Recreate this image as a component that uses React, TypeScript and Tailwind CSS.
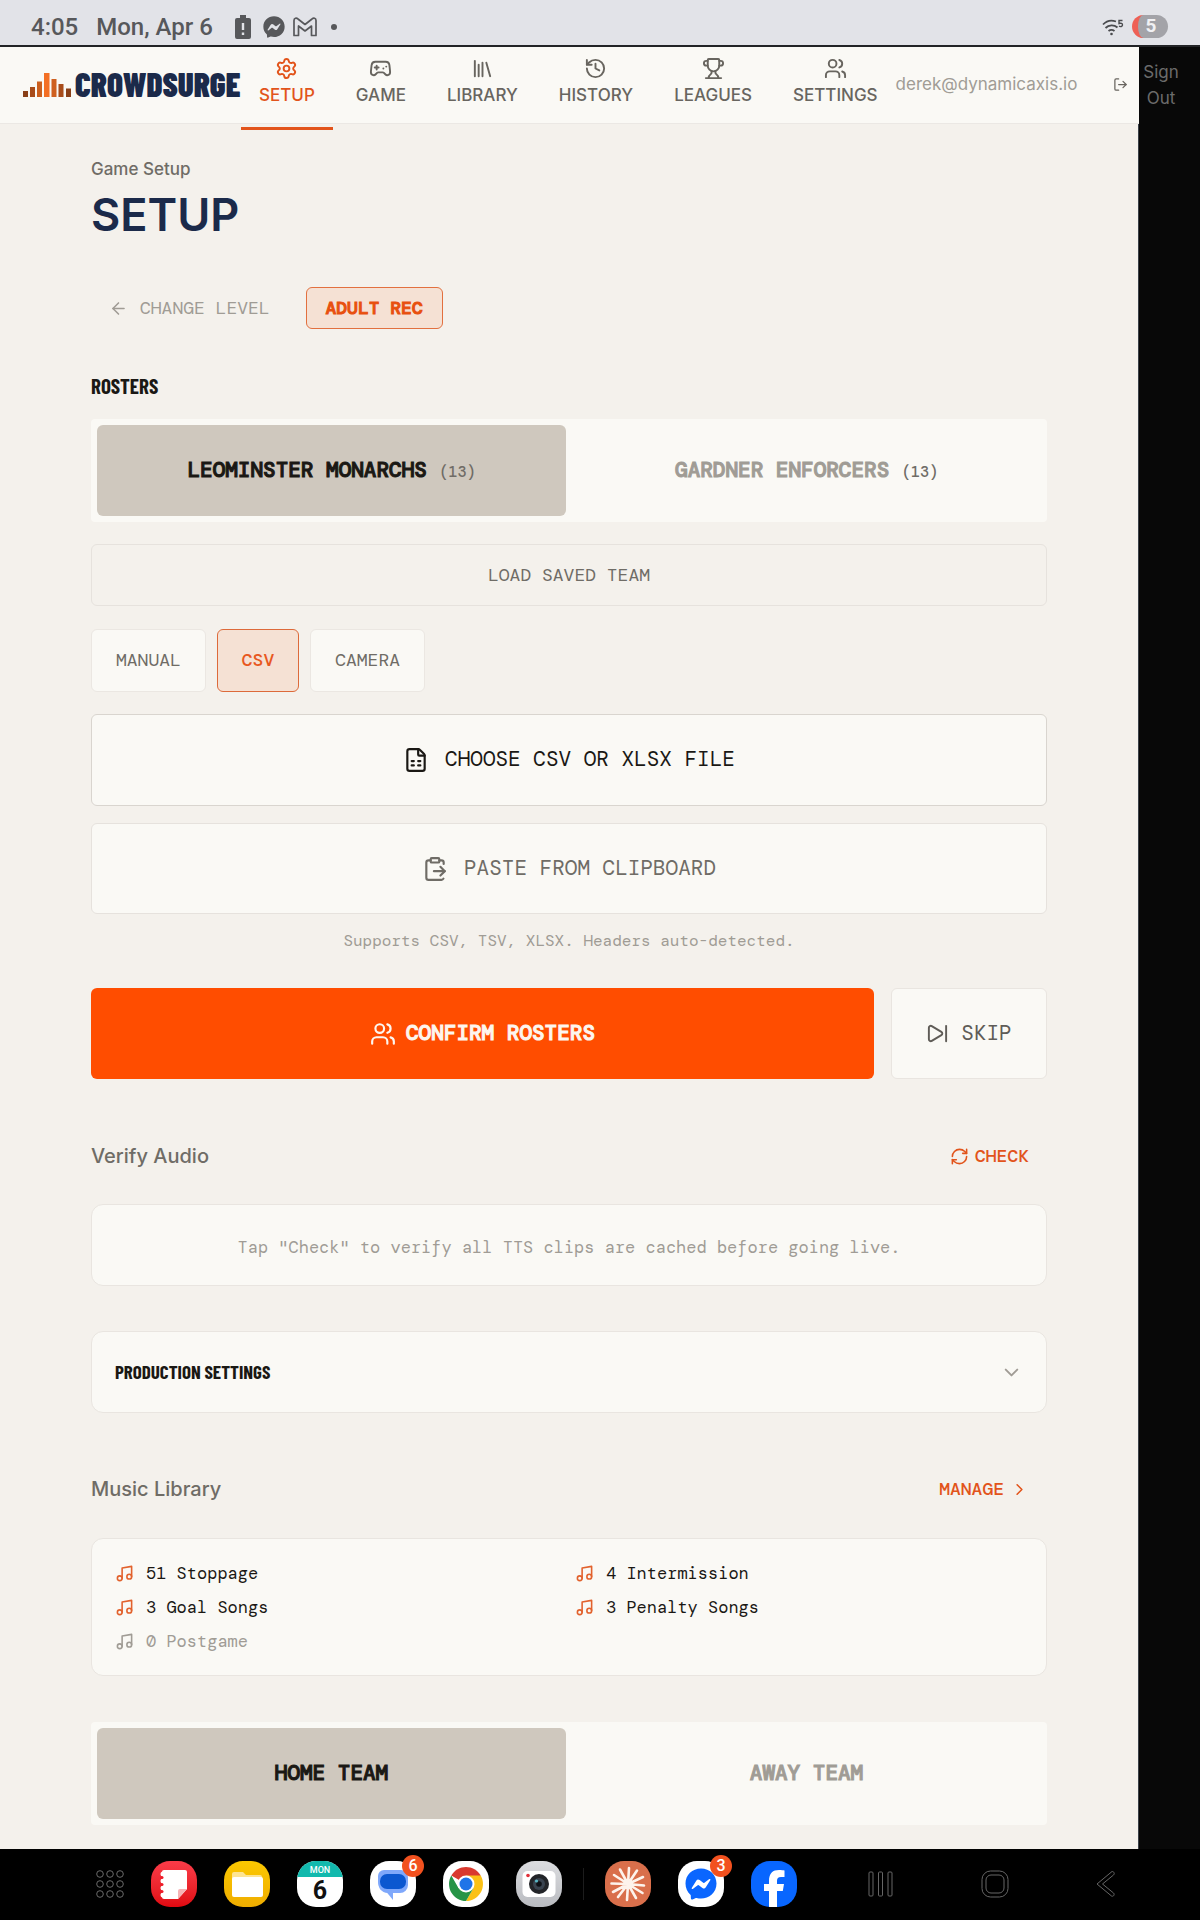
import { ReactNode } from "react";
import {
  ArrowLeft,
  ChevronDown,
  ChevronRight,
  ClipboardPaste,
  FileSpreadsheet,
  Gamepad2,
  History,
  Library,
  LogOut,
  LucideIcon,
  Music,
  RefreshCw,
  Settings,
  SkipForward,
  Trophy,
  Users,
} from "lucide-react";
import { FaFacebookMessenger } from "react-icons/fa";

const navItems: { label: string; icon: LucideIcon; active?: boolean }[] = [
  { label: "SETUP", icon: Settings, active: true },
  { label: "GAME", icon: Gamepad2 },
  { label: "LIBRARY", icon: Library },
  { label: "HISTORY", icon: History },
  { label: "LEAGUES", icon: Trophy },
  { label: "SETTINGS", icon: Users },
];

const songs = [
  { count: 51, name: "Stoppage" },
  { count: 4, name: "Intermission" },
  { count: 3, name: "Goal Songs" },
  { count: 3, name: "Penalty Songs" },
  { count: 0, name: "Postgame" },
];

// Android status bar
function StatusBar() {
  return (
    <div className="flex h-[47px] items-center justify-between border-b-2 border-[#222326] bg-[#e2e3e8] pt-2 pr-8 pl-[31px] font-[Roboto,sans-serif] text-[24px] font-medium text-[#57585b]">
      <div className="flex items-center">
        <span>4:05</span>
        <span className="ml-[18px]">Mon, Apr 6</span>
        <svg className="ml-[22px] h-6 w-4" viewBox="0 0 16 24">
          <path
            d="M5 0h6v3h3a2 2 0 0 1 2 2v17a2 2 0 0 1-2 2H2a2 2 0 0 1-2-2V5a2 2 0 0 1 2-2h3z"
            fill="#57585b"
          />
          <path d="M8 8v7M8 17.500v2.500" stroke="#e2e3e8" strokeWidth="2.400" />
        </svg>
        <FaFacebookMessenger className="ml-3 h-[22px] w-[22px]" />
        <svg className="ml-2 h-5 w-6" viewBox="0 0 24 20" fill="none" stroke="#57585b" strokeWidth="1.700">
          <path
            d="M1 18.500V3.500C1 1 3.500.500 5 2l7 5.500L19 2c1.500-1.500 4-1 4 1.500v15h-4.500V9L12 14 5.500 9v9.500z"
            strokeLinejoin="round"
          />
        </svg>
        <span className="ml-3.5 h-1.5 w-1.5 rounded-full bg-[#57585b]" />
      </div>
      <div className="flex items-center gap-2">
        <svg className="h-5 w-[22px]" viewBox="0 0 22 20" fill="none" stroke="#4a4b4e" strokeWidth="1.800">
          <path d="M1 7.500a12 12 0 0 1 13-3M3.500 11a9 9 0 0 1 12-.500M6.500 14a5 5 0 0 1 6 0" />
          <circle cx="9.500" cy="17" r="1.300" fill="#4a4b4e" stroke="none" />
          <path d="M20.500 3.500H17v3c2-.600 3.500 0 3.500 1.500S18.500 10 17 9.200" strokeWidth="1.400" />
        </svg>
        <div className="flex h-[23px] w-9 items-center justify-center overflow-hidden rounded-full border-l-[6px] border-[#ee6055] bg-[#a3a3a8] pr-1 text-[19px] font-bold text-[#f1f1f4]">
          5
        </div>
      </div>
    </div>
  );
}

function Logo() {
  return (
    <a href="#" className="flex w-[218px] shrink-0 items-end gap-1 pb-0.5" aria-label="Crowdsurge">
      <svg className="h-6 w-12 shrink-0" viewBox="0 0 48 24">
        <rect x="0" y="18" width="5" height="6" fill="#8a4018" />
        <rect x="7" y="14" width="5" height="10" fill="#a84c1a" />
        <rect x="14" y="8.500" width="5" height="15.500" fill="#cb5f1e" />
        <rect x="21" y="0" width="5.500" height="24" fill="#f36f24" />
        <rect x="28.500" y="6" width="5" height="18" fill="#cf601f" />
        <rect x="35.500" y="11" width="5" height="13" fill="#a84c1a" />
        <rect x="43" y="15.500" width="5" height="8.500" fill="#8a4018" />
      </svg>
      <span className="font-['Barlow_Condensed','Liberation_Sans',sans-serif] text-[33px] leading-[26px] font-black text-[#1b2a4a]">
        CROWDSURGE
      </span>
    </a>
  );
}

function Header() {
  return (
    <header className="mr-[61px] h-[77px] border-b border-[#ebe8e4] bg-[#faf9f5] pl-[23px]">
      {/* the row runs past the header's right edge */}
      <div className="-mr-[61px] flex h-[75px] items-center">
        <Logo />
        <nav className="flex h-full shrink-0 gap-[5px]">
          {navItems.map(({ label, icon: Icon, active }) => (
            <a
              key={label}
              href="#"
              className={
                active
                  ? "-mb-2 flex flex-col items-center border-b-[3px] border-[#e2541b] px-[18px] pt-2.5 text-[#e2541b]"
                  : "flex flex-col items-center px-[18px] pt-2.5 text-[#68655f]"
              }
            >
              <Icon size={23} strokeWidth={2} />
              <span className="mt-[3px] text-[17px] leading-6 font-medium">{label}</span>
            </a>
          ))}
        </nav>
        <span className="text-[17px] text-[#a09c95]">derek@dynamicaxis.io</span>
        <button className="ml-auto flex w-[87px] items-center justify-between pr-[17px] text-[17px] leading-[26px] text-[#6b6b6b]">
          <LogOut size={15} strokeWidth={2} className="text-[#68655f]" />
          <span className="w-[44px] text-center">Sign Out</span>
        </button>
      </div>
    </header>
  );
}

function SegmentedTabs({ left, right }: { left: ReactNode; right: ReactNode }) {
  return (
    <div className="grid grid-cols-2 gap-1.5 rounded bg-[#faf9f5] p-1.5 text-[21px] font-medium [-webkit-text-stroke:1px]">
      <button className="h-[91px] rounded-md bg-[#cfc8be] text-[#1a1814]">{left}</button>
      <button className="h-[91px] rounded-md text-[#a09c95]">{right}</button>
    </div>
  );
}

function Count({ value }: { value: number }) {
  return <span className="text-[15px] text-[#6f6c66] [-webkit-text-stroke:0px]">({value})</span>;
}

function SectionTitle({ title, children }: { title: string; children: ReactNode }) {
  return (
    <div className="flex h-12 items-center justify-between">
      <h2 className="font-[Inter,sans-serif] text-[20px] font-medium text-[#6f6c66]">{title}</h2>
      {children}
    </div>
  );
}

function Main() {
  return (
    <main className="mr-[61px] border-r border-[#3a4048] bg-[#f4f1ec] px-[91px] pt-8 pb-6 font-['DM_Mono','Liberation_Mono',monospace]">
      <p className="font-[Inter,sans-serif] text-[17px] leading-[26px] font-medium text-[#6f6c66]">Game Setup</p>
      <h1 className="mt-[5px] font-[Inter,sans-serif] text-[45px] leading-[56px] font-semibold text-[#1b2a4a]">SETUP</h1>

      <div className="mt-[44px] flex items-center text-[18px]">
        <button className="flex items-center gap-3 pl-[18px] text-[#a09c95]">
          <ArrowLeft size={19} strokeWidth={2} />
          CHANGE LEVEL
        </button>
        <span className="ml-[36px] flex h-[42px] w-[137px] items-center justify-center rounded-md border border-[#e2703f] bg-[#f5e1d4] font-medium text-[#e8500f] [-webkit-text-stroke:1px]">
          ADULT REC
        </span>
      </div>

      <h2 className="mt-[44px] font-['Barlow_Condensed','Liberation_Sans',sans-serif] text-[21px] leading-[26px] font-bold text-[#1a1814]">
        ROSTERS
      </h2>
      <div className="mt-5">
        <SegmentedTabs
          left={<>LEOMINSTER MONARCHS <Count value={13} /></>}
          right={<>GARDNER ENFORCERS <Count value={13} /></>}
        />
      </div>

      <button className="mt-[22px] h-[62px] w-full rounded-md border border-[#e6e2dd] text-[18px] text-[#6f6c66]">
        LOAD SAVED TEAM
      </button>

      <div className="mt-[23px] flex h-[63px] gap-[11px] text-[18px] text-[#6f6c66]">
        <button className="rounded-md border border-[#ebe7e2] bg-[#faf9f5] px-6">MANUAL</button>
        <button className="rounded-md border border-[#dd6a3a] bg-[#f5e1d4] px-6 font-medium text-[#e8581f]">CSV</button>
        <button className="rounded-md border border-[#ebe7e2] bg-[#faf9f5] px-6">CAMERA</button>
      </div>

      <button className="mt-[22px] flex h-[92px] w-full items-center justify-center gap-4 rounded-md border border-[#d9d5cf] bg-[#faf9f5] text-[21px] text-[#1a1814]">
        <FileSpreadsheet size={26} strokeWidth={2} />
        CHOOSE CSV OR XLSX FILE
      </button>
      <button className="mt-[17px] flex h-[91px] w-full items-center justify-center gap-4 rounded-md border border-[#e6e2dd] bg-[#faf9f5] text-[21px] text-[#6f6c66]">
        <ClipboardPaste size={26} strokeWidth={2} />
        PASTE FROM CLIPBOARD
      </button>
      <p className="mt-[15px] text-center text-[16px] leading-6 text-[#a09c95]">
        Supports CSV, TSV, XLSX. Headers auto-detected.
      </p>

      <div className="mt-[35px] flex h-[91px] gap-[17px] text-[21px]">
        <button className="flex grow items-center justify-center gap-2.5 rounded-md bg-[#ff4d00] font-medium text-[#fdf6ef]">
          <Users size={26} strokeWidth={2} />
          <span className="[-webkit-text-stroke:1px]">CONFIRM ROSTERS</span>
        </button>
        <button className="flex w-[156px] items-center justify-center gap-3 rounded-md border border-[#e9e5e0] bg-[#faf9f5] text-[#5f5c57]">
          <SkipForward size={23} strokeWidth={2} />
          SKIP
        </button>
      </div>

      <div className="mt-[53px]">
        <SectionTitle title="Verify Audio">
          <button className="flex items-center gap-1.5 pr-[18px] text-[18px] font-medium text-[#e2541b]">
            <RefreshCw size={19} strokeWidth={2} />
            CHECK
          </button>
        </SectionTitle>
      </div>
      <div className="mt-6 flex h-[82px] items-center justify-center rounded-xl border border-[#e9e5e0] bg-[#faf9f5] pt-1.5 text-[17px] text-[#a09c95]">
        Tap "Check" to verify all TTS clips are cached before going live.
      </div>

      <button className="mt-[45px] flex h-[82px] w-full items-center justify-between rounded-xl border border-[#e9e5e0] bg-[#faf9f5] px-[23px] text-[#a09c95]">
        <span className="font-['Barlow_Condensed','Liberation_Sans',sans-serif] text-[19px] font-bold text-[#1a1814]">
          PRODUCTION SETTINGS
        </span>
        <ChevronDown size={23} strokeWidth={2} />
      </button>

      <div className="mt-[52px]">
        <SectionTitle title="Music Library">
          <button className="flex items-center gap-1.5 pr-[18px] text-[18px] font-medium text-[#e2541b]">
            MANAGE
            <ChevronRight size={19} strokeWidth={2} />
          </button>
        </SectionTitle>
      </div>
      <ul className="mt-[25px] grid h-[138px] auto-rows-min grid-cols-2 gap-x-3 rounded-xl border border-[#e9e5e0] bg-[#faf9f5] px-[23px] pt-[17px] text-[17px] leading-[34px] text-[#1a1814]">
        {songs.map(({ count, name }) => (
          <li key={name} className={count ? "flex items-center gap-3" : "flex items-center gap-3 text-[#a09c95]"}>
            <Music size={19} strokeWidth={2} className={count ? "text-[#e2622d]" : ""} />
            {count} {name}
          </li>
        ))}
      </ul>

      <div className="mt-[46px]">
        <SegmentedTabs left="HOME TEAM" right="AWAY TEAM" />
      </div>
    </main>
  );
}

// Dock tile with an optional unread badge
function AppTile({ name, className, badge, children }: { name: string; className: string; badge?: number; children: ReactNode }) {
  return (
    <button aria-label={name} className="relative h-[46px] w-[46px] shrink-0">
      <span className={`flex h-full w-full items-center justify-center overflow-hidden rounded-[19px] ${className}`}>
        {children}
      </span>
      {badge && (
        <span className="absolute -top-1.5 -right-2 flex h-[22px] w-[22px] items-center justify-center rounded-full bg-[#f2511f] text-[16px] font-medium text-white">
          {badge}
        </span>
      )}
    </button>
  );
}

function Dock() {
  return (
    <footer className="flex h-[72px] items-center justify-between bg-black pr-[84px] pb-0.5 pl-24 font-[Roboto,sans-serif]">
      <div className="flex items-center gap-[27px]">
        <button aria-label="All apps">
          <svg className="h-7 w-7" viewBox="0 0 28 28" fill="none" stroke="#6a6a6a" strokeWidth="1">
            {[4, 14, 24].map((y) => [4, 14, 24].map((x) => <circle key={`${x}-${y}`} cx={x} cy={y} r="3.300" />))}
          </svg>
        </button>
        <AppTile name="Notes" className="bg-linear-to-b from-[#fb3b48] to-[#e0070f]">
          <svg className="h-full w-full" viewBox="0 0 46 46">
            <path d="M13 9h21a2 2 0 0 1 2 2v17L27 38H13a2 2 0 0 1-2-2V11a2 2 0 0 1 2-2z" fill="#fff" />
            <path d="M36 28h-7a2 2 0 0 0-2 2v8z" fill="#f6b3b5" />
            <g fill="#fff">
              <circle cx="12" cy="13" r="2.500" />
              <circle cx="12" cy="20" r="2.500" />
              <circle cx="12" cy="27" r="2.500" />
              <circle cx="12" cy="34" r="2.500" />
            </g>
            <g fill="#ee1c29">
              <circle cx="11" cy="16.500" r="1.500" />
              <circle cx="11" cy="23.500" r="1.500" />
              <circle cx="11" cy="30.500" r="1.500" />
            </g>
          </svg>
        </AppTile>
        <AppTile name="My Files" className="bg-linear-to-b from-[#fcc800] to-[#efad00]">
          <svg className="h-full w-full" viewBox="0 0 46 46">
            <path d="M8 13a2 2 0 0 1 2-2h9l3 3h14a2 2 0 0 1 2 2v6H8z" fill="#fde494" />
            <rect x="8" y="16" width="31" height="20" rx="2" fill="#fff" />
          </svg>
        </AppTile>
        <AppTile name="Calendar" className="flex-col bg-white">
          <span className="h-4 w-full bg-[#12b9ad] text-center text-[9px] leading-[18px] font-medium text-white">MON</span>
          <span className="h-[30px] text-[25px] leading-7 font-bold text-[#111]">6</span>
        </AppTile>
        <AppTile name="Messages" className="bg-white" badge={6}>
          <svg className="h-full w-full" viewBox="0 0 46 46">
            <path d="M14 9h17a7 7 0 0 1 7 7v8a8 8 0 0 1-8 8H18C11 32 8 26 8 21v-6a6 6 0 0 1 6-6z" fill="#7fa8fb" />
            <path d="M14 28l9 11V30z" fill="#7fa8fb" />
            <rect x="10" y="13" width="26" height="15" rx="7" fill="#0b57d0" />
          </svg>
        </AppTile>
        <AppTile name="Chrome" className="bg-white">
          <svg className="h-full w-full" viewBox="0 0 46 46">
            <path d="M23 23L8.300 14.500A17 17 0 0 1 37.700 14.500z" fill="#d93a2f" />
            <path d="M23 14.500h14.700A17 17 0 0 1 23 40l7.400-12.700z" fill="#fbc116" />
            <path d="M8.300 14.500L15.600 27.200 30.400 27.200 23 40A17 17 0 0 1 8.300 14.500z" fill="#269447" />
            <circle cx="23" cy="23" r="8.500" fill="#fff" />
            <circle cx="23" cy="23" r="6.500" fill="#1f74e8" />
          </svg>
        </AppTile>
        <AppTile name="Camera" className="bg-linear-to-b from-[#dcdde0] to-[#b9bbc0]">
          <svg className="h-full w-full" viewBox="0 0 46 46">
            <rect x="6.500" y="10" width="33" height="26" rx="5" fill="#fff" />
            <circle cx="12" cy="14.500" r="1.800" fill="#e0313a" />
            <circle cx="23" cy="23" r="10" fill="#222428" />
            <circle cx="23" cy="23" r="6" fill="#39434f" />
            <circle cx="23" cy="23" r="2.800" fill="#0e1116" />
            <circle cx="20.500" cy="20" r="1.600" fill="#58b5c4" />
          </svg>
        </AppTile>
        <span className="-mx-[6px] h-8 w-px bg-[#1c1c1c]" />
        <AppTile name="Claude" className="bg-[#d96f4b]">
          <svg className="h-full w-full" viewBox="0 0 46 46" stroke="#fdf3ec" strokeWidth="2.600" strokeLinecap="round">
            <path d="M23 23L24 7M23 23L32 9.500M23 23L38 16M23 23L39 24.500M23 23L37.500 32M23 23L31 37M23 23L22 39M23 23L13 36M23 23L8 31M23 23L6.500 22.500M23 23L9 14M23 23L15 8.500" />
          </svg>
        </AppTile>
        <AppTile name="Messenger" className="bg-white" badge={3}>
          <FaFacebookMessenger className="h-8 w-8 text-[#0a66ff]" />
        </AppTile>
        <AppTile name="Facebook" className="bg-[#0866ff]">
          <svg className="h-full w-full" viewBox="0 0 46 46">
            <path
              d="M18 46V30h-5v-7h5v-3c0-8 4-11 10-11 2.500 0 4 .200 5.500.600V16H30c-3 0-4 1.500-4 4v3h7l-1.200 7H26v16z"
              fill="#fff"
            />
          </svg>
        </AppTile>
      </div>
      <div className="flex items-center gap-[87px]">
        <button aria-label="Recents">
          <svg className="h-[26px] w-[26px]" viewBox="0 0 26 26" fill="none" stroke="#666">
            <rect x="1" y="1" width="4" height="24" rx="1" />
            <rect x="10.500" y="1" width="4" height="24" rx="1" />
            <rect x="20" y="1" width="4" height="24" rx="1" />
          </svg>
        </button>
        <button aria-label="Home">
          <svg className="h-7 w-7" viewBox="0 0 28 28" fill="none" stroke="#666">
            <rect x="1" y="1" width="26" height="26" rx="8.500" />
            <rect x="5" y="5" width="18" height="18" rx="5" />
          </svg>
        </button>
        <button aria-label="Back">
          <svg className="h-7 w-5" viewBox="0 0 20 28" fill="none" stroke="#666" strokeLinejoin="round">
            <path d="M16 1.500c2 0 3 2 1.500 3.500L6.500 14l11 9c1.500 1.500 0 4-2 3L1 14z" />
          </svg>
        </button>
      </div>
    </footer>
  );
}

export default function App() {
  return (
    <div className="bg-[#080808] font-[Inter,sans-serif]">
      <StatusBar />
      <Header />
      <Main />
      <Dock />
    </div>
  );
}
